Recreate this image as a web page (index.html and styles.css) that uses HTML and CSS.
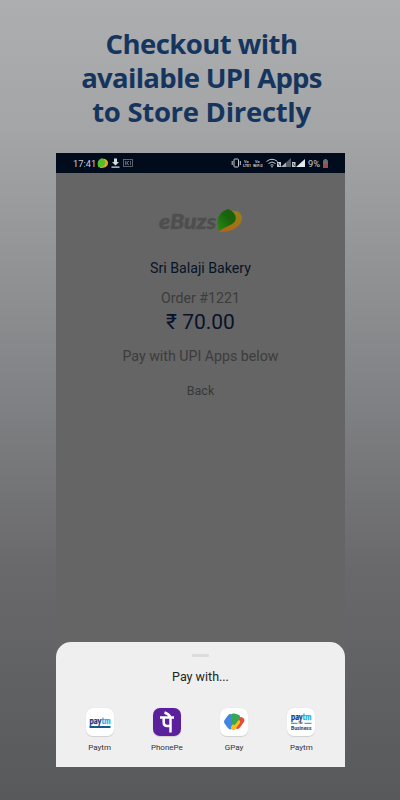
FILE: index.html
```html
<!DOCTYPE html>
<html lang="en">
<head>
<meta charset="utf-8">
<title>Checkout with available UPI Apps</title>
<link rel="stylesheet" href="styles.css">
</head>
<body>
<h1 class="headline"><span class="l1">Checkout with</span><span class="l2">available UPI Apps</span><span class="l3">to Store Directly</span></h1>
<main class="phone">
  <header class="status">
    <span class="time">17:41</span>
    <svg class="status-left" width="38" height="12" viewBox="0 0 38 12">
      <path d="M4 2C8 1 11 3 11 6c0 4-4 5-8 5z" fill="#f0a51c"/>
      <path d="M1.500 10.500C-.5 6 1 2 5 1.200c4 1.500 4.500 6 .5 8.500z" fill="#4fc02e"/>
      <path d="M17 1.500h3v3.500h2l-3.500 3.500L15 5h2zM14.500 9.500h8v1.300h-8z" fill="#d5dae0"/>
      <rect x="26.500" y="2.500" width="9" height="7" fill="none" stroke="#6f7880" stroke-width=".8"/>
      <path d="M28.500 4v4M33.500 4v4M32 4l-2 2 2 2M30 4v4" fill="none" stroke="#6f7880" stroke-width=".8"/>
    </svg>
    <svg class="status-right" width="75" height="12" viewBox="0 0 75 12">
      <rect x="3" y="2" width="4.500" height="8" rx=".8" fill="none" stroke="#c3cad0"/>
      <path d="M1.200 4v4M9.300 4v4" stroke="#c3cad0"/>
      <g class="tiny"><text x="13" y="5.500">Vo</text><text x="12" y="10">LTE1</text><text x="24" y="5.500">Vo</text><text x="22" y="10">WiFi2</text></g>
      <g fill="none" stroke="#c3cad0"><path d="M35.500 4.500q5.500-4.500 11 0M37.500 6.500q3.500-3 7 0M39.500 8.300q1.500-1.200 3 0"/></g>
      <circle cx="41" cy="9.700" r=".8" fill="#c3cad0"/>
      <rect x="46" y="5" width="4" height="5" fill="#c3cad0"/><path d="M47 6l2 3" stroke="#15202c" stroke-width=".8"/>
      <path d="M50 10L60 1v9z" fill="#545d65"/><path d="M50 10l5-4.500V10z" fill="#aab1b7"/>
      <rect x="61" y="5" width="3.500" height="5" fill="#c3cad0"/><path d="M62 6l1.500 3" stroke="#15202c" stroke-width=".8"/>
      <path d="M65 10L74 2v8z" fill="#e5e9ec"/>
    </svg>
    <span class="percent">9%</span>
    <svg class="battery" width="5" height="9" viewBox="0 0 6 11"><path d="M1.500 0h3v1.500H6V11H0V1.500h1.500z" fill="#6f6d70"/><path d="M0 6h6v5H0z" fill="#a34b48"/></svg>
  </header>
  <section class="order">
    <svg class="logo" width="86" height="28" viewBox="0 0 86 28">
      <defs>
        <linearGradient id="leaf" x1="0" y1="1" x2="1" y2="0"><stop offset="0" stop-color="#2f8a14"/><stop offset=".6" stop-color="#17640c"/><stop offset="1" stop-color="#1c5e0c"/></linearGradient>
        <linearGradient id="gold" x1="0" y1="1" x2="1" y2="0"><stop offset="0" stop-color="#b8630f"/><stop offset="1" stop-color="#93801a"/></linearGradient>
      </defs>
      <text class="wordmark" x="1" y="24" textLength="57" lengthAdjust="spacingAndGlyphs">eBuzs</text>
      <path d="M61 26.500C74 28 83.500 21 84 13 84 8 79 4.500 73 6z" fill="url(#gold)"/>
      <path d="M61 26.500C57.500 16 60 7 70 4 76 6 80 12 76.500 17 73 21 66 22 61 26.500z" fill="url(#leaf)"/>
    </svg>
    <div class="store">Sri Balaji Bakery</div>
    <div class="number">Order #1221</div>
    <div class="amount">₹ 70.00</div>
    <div class="hint">Pay with UPI Apps below</div>
    <div class="back">Back</div>
  </section>
  <section class="sheet">
    <div class="handle"></div>
    <h2 class="title">Pay with...</h2>
    <div class="apps">
      <div class="app">
        <svg class="icon" viewBox="0 0 28 28"><text class="paytm" x="3.500" y="15.500" textLength="21" lengthAdjust="spacingAndGlyphs">pay<tspan class="tm">tm</tspan></text><path d="M3.500 18h21v2h-21z" fill="#125b91"/></svg>
        <span>Paytm</span>
      </div>
      <div class="app">
        <svg class="icon purple" viewBox="0 0 28 28"><g fill="none" stroke="#fff" stroke-width="2.500"><path d="M7 9.500h14M17.500 9.500V24.500M10.700 10v4.500q0 3.500 3.500 3.500h3.300"/><path d="M17.500 9.500Q16 6 11.500 4.500"/></g></svg>
        <span>PhonePe</span>
      </div>
      <div class="app">
        <svg class="icon" viewBox="0 0 28 28"><g fill="none" stroke-linecap="round" stroke-linejoin="round"><path d="M7.500 13.500l3-4M7.500 14l3 4M10.500 11v6" stroke="#4285e8" stroke-width="6.500"/><path d="M17.500 17.500l3.500-5" stroke="#e84b37" stroke-width="6.500"/><path d="M13.500 8.500l3.500 1-3 5" stroke="#36a753" stroke-width="6"/><path d="M17.500 14l-4 5.500" stroke="#fbbc18" stroke-width="5"/><path d="M17 10.500L14 14.500" stroke="#36a753" stroke-width="4.500"/></g></svg>
        <span>GPay</span>
      </div>
      <div class="app">
        <svg class="icon" viewBox="0 0 28 28"><text class="paytm" x="4" y="11.500" textLength="20.500" lengthAdjust="spacingAndGlyphs">pay<tspan class="tm">tm</tspan></text><path d="M4 15.300h6.500M17.500 15.300h7" stroke="#3f7fa8"/><text class="for" x="11.500" y="16.200">for</text><text class="biz" x="4" y="21.500" textLength="20.500" lengthAdjust="spacingAndGlyphs">Business</text></svg>
        <span>Paytm</span>
      </div>
    </div>
  </section>
</main>
</body>
</html>
```
FILE: styles.css
```css
* { box-sizing: border-box; }
body {
  margin: 0;
  height: 800px;
  overflow: hidden;
  display: flex;
  flex-direction: column;
  background: linear-gradient(#adaeb0 0, #a4a5a6 130px, #808184 400px, #69696b 570px, #58595b 800px);
  font-family: Roboto, "Liberation Sans", sans-serif;
}
.headline {
  margin: 27px 0 0;
  padding-left: 3px;
  height: 126px;
  display: flex;
  flex-direction: column;
  align-items: center;
  font: 700 27.500px/34px "Open Sans", "Noto Sans", sans-serif;
  color: #15355e;
  white-space: nowrap;
}
.l1 { letter-spacing: -.55px; }
.l2 { letter-spacing: -.7px; }
.l3 { letter-spacing: -.3px; }
.phone {
  width: 289px;
  height: 614px;
  margin-left: 56px;
  background: #656565;
  display: flex;
  flex-direction: column;
}
.status {
  height: 20px;
  background: #000c1c;
  color: #c5ccd4;
  display: flex;
  align-items: center;
  padding: 0 17px 0 17px;
  font-size: 9.3px;
}
.time { width: 23px; }
.status-left { margin-left: 1px; }
.status-right { margin-left: auto; }
.percent { width: 15px; margin-left: 2px; }
.tiny { font: 700 3.800px Roboto, sans-serif; fill: #bfc6cd; }
.order {
  height: 469px;
  padding-top: 32px;
  display: flex;
  flex-direction: column;
  align-items: center;
  white-space: nowrap;
}
.logo { margin-left: 1px; }
.wordmark { font: italic 900 21px Lato, sans-serif; fill: #4e4e4e; stroke: #4e4e4e; stroke-width: .5px; }
.store { margin-top: 26px; font-size: 14.200px; line-height: 18px; color: #071328; }
.number { margin-top: 12px; font-size: 14.200px; line-height: 18px; color: #3c3c3c; }
.amount { margin-top: 2px; font-size: 21px; line-height: 26px; color: #06132a; }
.hint { margin-top: 11px; font-size: 14.200px; line-height: 20px; color: #3c3c3c; }
.back { margin-top: 17px; font-size: 12.500px; line-height: 16px; color: #383838; }
.sheet {
  flex: 1;
  background: #efefef;
  border-radius: 15px 15px 0 0;
  display: flex;
  flex-direction: column;
  align-items: center;
}
.handle { width: 17px; height: 3px; margin-top: 12px; border-radius: 1px; background: #dcdcdc; }
.title { margin: 11px 0 0; font-size: 12.500px; line-height: 18px; font-weight: 400; color: #222; }
.apps {
  width: 269px;
  margin-top: 22px;
  display: grid;
  grid-template-columns: repeat(4, 1fr);
}
.app {
  display: flex;
  flex-direction: column;
  align-items: center;
  gap: 6px;
  font-size: 8px;
  line-height: 11px;
  color: #333;
}
.icon { width: 28px; height: 28px; border-radius: 7px; background: #fff; box-shadow: 0 .5px 1px #0002; }
.purple { background: #5b219d; }
.paytm { font: 900 8.500px Lato, sans-serif; fill: #123a78; stroke: #123a78; stroke-width: .25px; }
.tm { fill: #20aee5; stroke: #20aee5; }
.for { font: 700 3.200px Roboto, sans-serif; fill: #335; }
.biz { font: 700 4.800px Roboto, sans-serif; fill: #294071; }
```
